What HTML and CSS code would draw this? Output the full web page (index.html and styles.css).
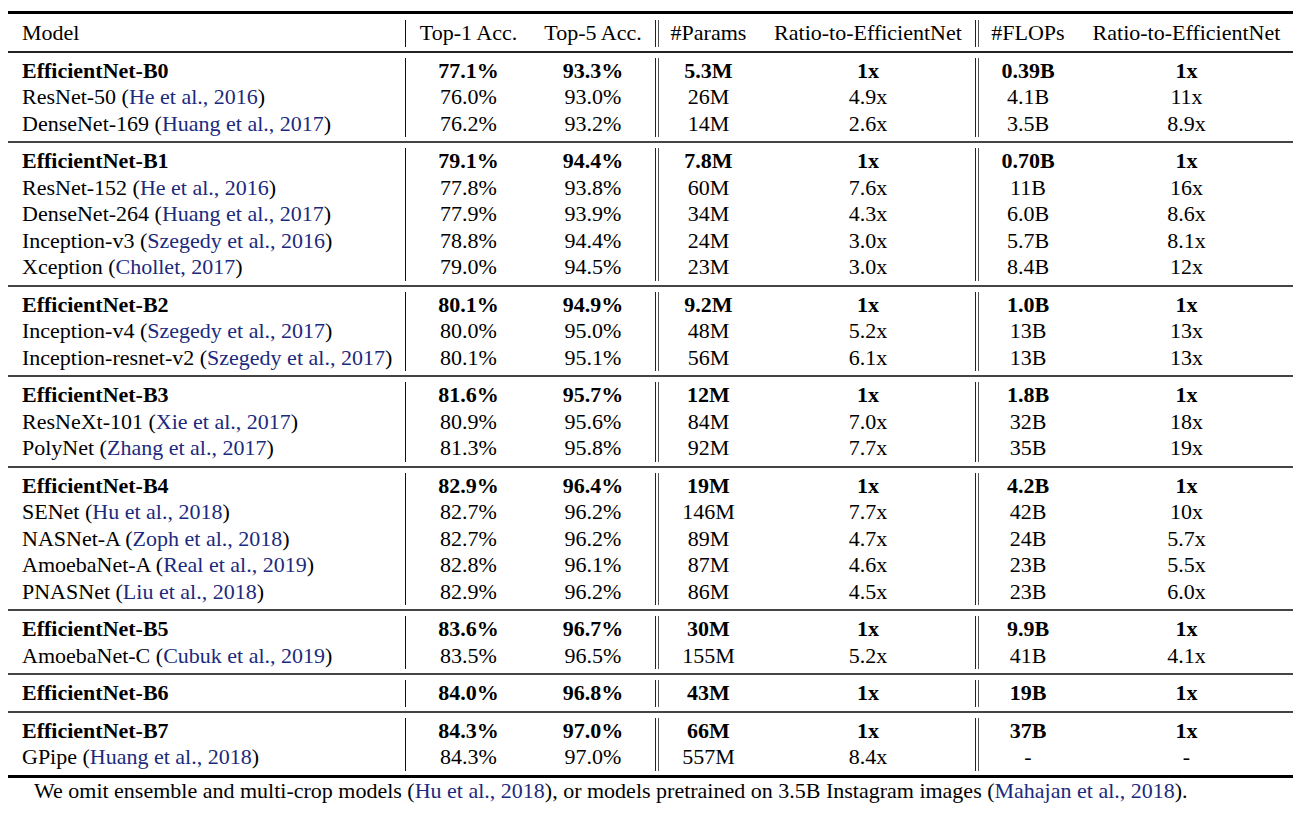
FILE: index.html
```html
<!DOCTYPE html>
<html>
<head>
<meta charset="utf-8">
<link rel="stylesheet" href="styles.css">
</head>
<body>
<div class="page">
<div class="toprule"></div>
<table class="tbl">
<colgroup>
<col class="c-model"><col class="c-top1"><col class="c-top5"><col class="c-params"><col class="c-ratio1"><col class="c-flops"><col class="c-ratio2">
</colgroup>
<tr class="gap-top"><td colspan="7"></td></tr>
<tr>
<td class="model">Model</td><td class="v1">Top-1 Acc.</td><td>Top-5 Acc.</td><td class="v2">#Params</td><td>Ratio-to-EfficientNet</td><td class="v2">#FLOPs</td><td>Ratio-to-EfficientNet</td>
</tr>
<tr class="sep"><td colspan="7"><div class="rule head"></div></td></tr>

<tr class="b"><td class="model">EfficientNet-B0</td><td class="v1">77.1%</td><td>93.3%</td><td class="v2">5.3M</td><td>1x</td><td class="v2">0.39B</td><td>1x</td></tr>
<tr><td class="model">ResNet-50 (<span class="cite">He et al., 2016</span>)</td><td class="v1">76.0%</td><td>93.0%</td><td class="v2">26M</td><td>4.9x</td><td class="v2">4.1B</td><td>11x</td></tr>
<tr><td class="model">DenseNet-169 (<span class="cite">Huang et al., 2017</span>)</td><td class="v1">76.2%</td><td>93.2%</td><td class="v2">14M</td><td>2.6x</td><td class="v2">3.5B</td><td>8.9x</td></tr>
<tr class="sep"><td colspan="7"><div class="rule"></div></td></tr>

<tr class="b"><td class="model">EfficientNet-B1</td><td class="v1">79.1%</td><td>94.4%</td><td class="v2">7.8M</td><td>1x</td><td class="v2">0.70B</td><td>1x</td></tr>
<tr><td class="model">ResNet-152 (<span class="cite">He et al., 2016</span>)</td><td class="v1">77.8%</td><td>93.8%</td><td class="v2">60M</td><td>7.6x</td><td class="v2">11B</td><td>16x</td></tr>
<tr><td class="model">DenseNet-264 (<span class="cite">Huang et al., 2017</span>)</td><td class="v1">77.9%</td><td>93.9%</td><td class="v2">34M</td><td>4.3x</td><td class="v2">6.0B</td><td>8.6x</td></tr>
<tr><td class="model">Inception-v3 (<span class="cite">Szegedy et al., 2016</span>)</td><td class="v1">78.8%</td><td>94.4%</td><td class="v2">24M</td><td>3.0x</td><td class="v2">5.7B</td><td>8.1x</td></tr>
<tr><td class="model">Xception (<span class="cite">Chollet, 2017</span>)</td><td class="v1">79.0%</td><td>94.5%</td><td class="v2">23M</td><td>3.0x</td><td class="v2">8.4B</td><td>12x</td></tr>
<tr class="sep"><td colspan="7"><div class="rule"></div></td></tr>

<tr class="b"><td class="model">EfficientNet-B2</td><td class="v1">80.1%</td><td>94.9%</td><td class="v2">9.2M</td><td>1x</td><td class="v2">1.0B</td><td>1x</td></tr>
<tr><td class="model">Inception-v4 (<span class="cite">Szegedy et al., 2017</span>)</td><td class="v1">80.0%</td><td>95.0%</td><td class="v2">48M</td><td>5.2x</td><td class="v2">13B</td><td>13x</td></tr>
<tr><td class="model">Inception-resnet-v2 (<span class="cite">Szegedy et al., 2017</span>)</td><td class="v1">80.1%</td><td>95.1%</td><td class="v2">56M</td><td>6.1x</td><td class="v2">13B</td><td>13x</td></tr>
<tr class="sep"><td colspan="7"><div class="rule"></div></td></tr>

<tr class="b"><td class="model">EfficientNet-B3</td><td class="v1">81.6%</td><td>95.7%</td><td class="v2">12M</td><td>1x</td><td class="v2">1.8B</td><td>1x</td></tr>
<tr><td class="model">ResNeXt-101 (<span class="cite">Xie et al., 2017</span>)</td><td class="v1">80.9%</td><td>95.6%</td><td class="v2">84M</td><td>7.0x</td><td class="v2">32B</td><td>18x</td></tr>
<tr><td class="model">PolyNet (<span class="cite">Zhang et al., 2017</span>)</td><td class="v1">81.3%</td><td>95.8%</td><td class="v2">92M</td><td>7.7x</td><td class="v2">35B</td><td>19x</td></tr>
<tr class="sep"><td colspan="7"><div class="rule"></div></td></tr>

<tr class="b"><td class="model">EfficientNet-B4</td><td class="v1">82.9%</td><td>96.4%</td><td class="v2">19M</td><td>1x</td><td class="v2">4.2B</td><td>1x</td></tr>
<tr><td class="model">SENet (<span class="cite">Hu et al., 2018</span>)</td><td class="v1">82.7%</td><td>96.2%</td><td class="v2">146M</td><td>7.7x</td><td class="v2">42B</td><td>10x</td></tr>
<tr><td class="model">NASNet-A (<span class="cite">Zoph et al., 2018</span>)</td><td class="v1">82.7%</td><td>96.2%</td><td class="v2">89M</td><td>4.7x</td><td class="v2">24B</td><td>5.7x</td></tr>
<tr><td class="model">AmoebaNet-A (<span class="cite">Real et al., 2019</span>)</td><td class="v1">82.8%</td><td>96.1%</td><td class="v2">87M</td><td>4.6x</td><td class="v2">23B</td><td>5.5x</td></tr>
<tr><td class="model">PNASNet (<span class="cite">Liu et al., 2018</span>)</td><td class="v1">82.9%</td><td>96.2%</td><td class="v2">86M</td><td>4.5x</td><td class="v2">23B</td><td>6.0x</td></tr>
<tr class="sep"><td colspan="7"><div class="rule"></div></td></tr>

<tr class="b"><td class="model">EfficientNet-B5</td><td class="v1">83.6%</td><td>96.7%</td><td class="v2">30M</td><td>1x</td><td class="v2">9.9B</td><td>1x</td></tr>
<tr><td class="model">AmoebaNet-C (<span class="cite">Cubuk et al., 2019</span>)</td><td class="v1">83.5%</td><td>96.5%</td><td class="v2">155M</td><td>5.2x</td><td class="v2">41B</td><td>4.1x</td></tr>
<tr class="sep"><td colspan="7"><div class="rule"></div></td></tr>

<tr class="b"><td class="model">EfficientNet-B6</td><td class="v1">84.0%</td><td>96.8%</td><td class="v2">43M</td><td>1x</td><td class="v2">19B</td><td>1x</td></tr>
<tr class="sep"><td colspan="7"><div class="rule"></div></td></tr>

<tr class="b"><td class="model">EfficientNet-B7</td><td class="v1">84.3%</td><td>97.0%</td><td class="v2">66M</td><td>1x</td><td class="v2">37B</td><td>1x</td></tr>
<tr><td class="model">GPipe (<span class="cite">Huang et al., 2018</span>)</td><td class="v1">84.3%</td><td>97.0%</td><td class="v2">557M</td><td>8.4x</td><td class="v2">-</td><td>-</td></tr>
<tr class="gap-bot"><td colspan="7"></td></tr>
</table>
<div class="bottomrule"></div>
<p class="note">We omit ensemble and multi-crop models (<span class="cite">Hu et al., 2018</span>), or models pretrained on 3.5B Instagram images (<span class="cite">Mahajan et al., 2018</span>).</p>
</div>
</body>
</html>
```

FILE: styles.css
```css
html, body {
  margin: 0;
  padding: 0;
  background: #fff;
}

body {
  font-family: "Liberation Serif", "Times New Roman", serif;
  font-size: 22px;
  color: #000;
}

.page {
  padding: 11px 9px 0 8px;
}

.toprule,
.bottomrule {
  height: 3px;
  background: #000;
  width: 1285px;
}

.tbl {
  width: 1285px;
  table-layout: fixed;
  border-collapse: separate;
  border-spacing: 0;
}

.c-model { width: 397px; }
.c-top1 { width: 126px; }
.c-top5 { width: 124px; }
.c-params { width: 106px; }
.c-ratio1 { width: 214px; }
.c-flops { width: 105px; }
.c-ratio2 { width: 213px; }

.tbl td {
  padding: 0;
  height: 26.5px;
  line-height: 26.5px;
  text-align: center;
  white-space: nowrap;
  vertical-align: middle;
}

.tbl td.model {
  text-align: left;
  padding-left: 14px;
}

.tbl td.v1 {
  border-left: 1px solid #111;
}

.tbl td.v2 {
  border-left: 1px solid #222;
  box-shadow: inset 2px 0 0 #fff, inset 3px 0 0 #555;
}

.tbl tr.b td {
  font-weight: bold;
}

.tbl tr.sep td {
  height: auto;
  line-height: 0;
  padding: 4px 0 5px;
  border: none;
  box-shadow: none;
}

.tbl tr.gap-top td {
  height: 6px;
  line-height: 0;
  padding: 0;
}

.tbl tr.gap-bot td {
  height: 4px;
  line-height: 0;
  padding: 0;
}

.rule {
  height: 2px;
  background: #444;
}

.rule.head {
  background: #222;
}

.cite {
  color: #1b2a7c;
}

.note {
  margin: 0;
  padding-left: 26px;
  line-height: 26px;
}
```
